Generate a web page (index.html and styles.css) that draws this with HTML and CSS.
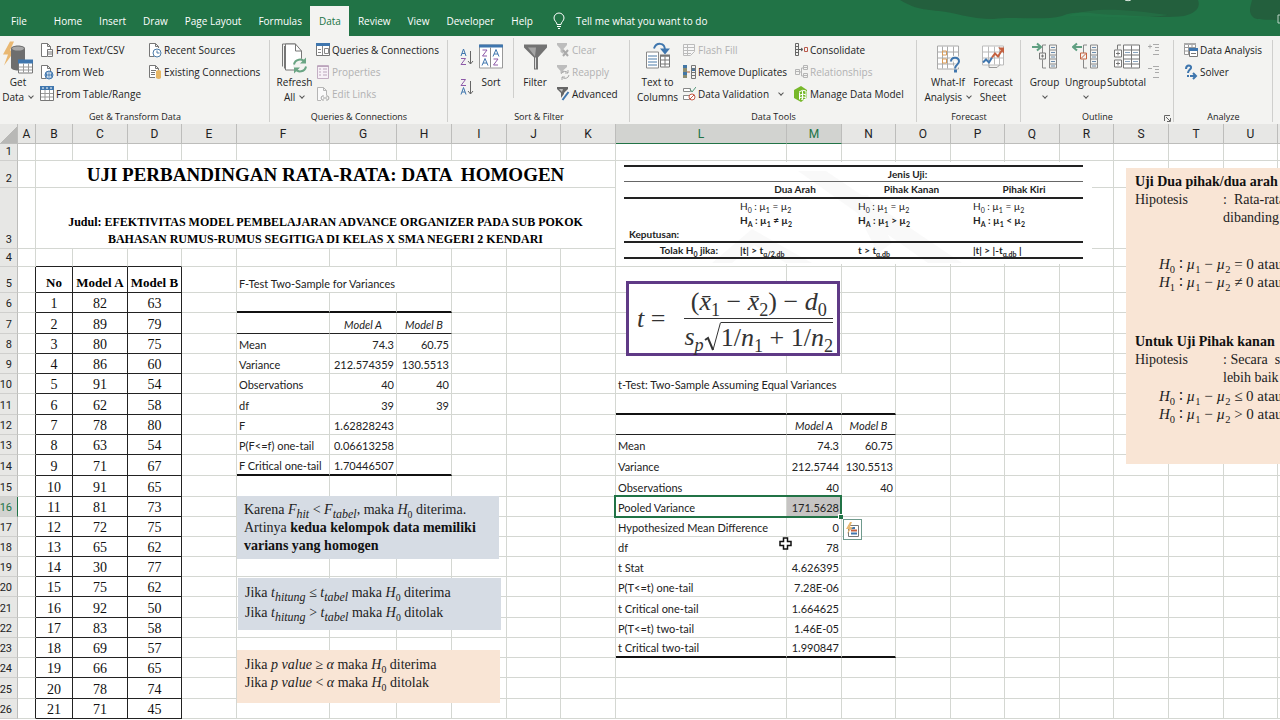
FILE: index.html
```html
<!DOCTYPE html>
<html lang="id">
<head>
<meta charset="utf-8">
<title>Uji Perbandingan Rata-Rata</title>
<link rel="stylesheet" href="styles.css">
</head>
<body>
<div class="app">
<header class="titlebar">
  <svg class="brush" width="380" height="36" viewBox="0 0 380 36" aria-hidden="true">
    <path d="M0 0h298c3 8-3 13-14 16-25 3-52-1-70-1-20 0-35-6-52 1-20 5-50 0-68 3-25 0-40-7-55-8-20-2-25-3-39-11z" fill="#235f3d"/>
    <path d="M352 0h28v21c-12-3-24 1-28-5-4-5-1-11 0-16z" fill="#235f3d"/>
    <path d="M168 16c28-10 60-6 100-1-30 5-70 1-100 1z" fill="#247a4a" opacity=".5"/>
    <path d="M225 0c3 1 5 1 7-1" stroke="#e8f0ea" fill="none"/>
    <path d="M380 15h-2v8h2" stroke="#b9d3c4" fill="none"/>
  </svg>
  <nav class="tabs">
    <button class="tab tab-file">File</button>
    <button class="tab">Home</button>
    <button class="tab">Insert</button>
    <button class="tab">Draw</button>
    <button class="tab">Page Layout</button>
    <button class="tab">Formulas</button>
    <button class="tab tab-active">Data</button>
    <button class="tab">Review</button>
    <button class="tab">View</button>
    <button class="tab">Developer</button>
    <button class="tab">Help</button>
    <button class="tab tab-tell"><svg width="12" height="18" viewBox="0 0 12 18" fill="none" stroke="#fff"><path d="M4 12.500c0-2.500-3-3.500-3-6.500a5 5 0 0 1 10 0c0 3-3 4-3 6.500zM4 14.500h4M5 16.500h2"/></svg>Tell me what you want to do</button>
  </nav>
</header>

<section class="ribbon" aria-label="Data">
  <div class="group">
    <div class="tools">
      <button class="big big-first"><svg width="32" height="34" viewBox="0 0 32 34"><path d="M8 1 1 14h5L2 25l11-15H8l4-9z" fill="#e9b872"/><path d="M9 8c0-4 14-4 14 0v19c0 4-14 4-14 0z" fill="#6e6e6e"/><ellipse cx="16" cy="8" rx="6" ry="2" fill="#a9a9a9"/><path d="M16.500 20.500h14v12h-14z" fill="#fff" stroke="#777"/><path d="M16 19h15v4H16z" fill="#3f76ae"/><path d="M17 26.500h13M17 29.500h13M21.500 23v9M26.500 23v9" stroke="#999"/></svg><span>Get<br>Data <i class="chev"></i></span></button>
      <div class="stack stack-a">
        <button class="small"><svg width="14" height="16" viewBox="0 0 14 16"><path d="M7 14.500H1.500v-13h6l3 3V7M7.500 1.500v3h3" fill="#fff" stroke="#777"/><path d="M7.500 7.500h5v7h-5zM7.500 10h5M7.500 12h5" fill="#fff" stroke="#777"/></svg>From Text/CSV</button>
        <button class="small"><svg width="14" height="16" viewBox="0 0 14 16"><path d="M6 14.500H1.500v-13h6l3 3V7M7.500 1.500v3h3" fill="#fff" stroke="#777"/><circle cx="9" cy="11" r="4" fill="#fff" stroke="#3f76ae"/><path d="M5 11h8M9 7v8M7 8q-1 3 0 6M11 8q1 3 0 6" stroke="#3f76ae" fill="none"/></svg>From Web</button>
        <button class="small"><svg width="14" height="16" viewBox="0 0 14 16"><path d="M.5 1.500h13v13H.5z" fill="#fff" stroke="#777"/><path d="M0 0h14v4H0z" fill="#3f76ae"/><path d="M1 7.500h12M1 11h12M5 4v10M9.500 4v10" stroke="#999"/><path d="M2 2h2M6 2h2M10 2h2" stroke="#fff"/></svg>From Table/Range</button>
      </div>
      <div class="stack">
        <button class="small"><svg width="14" height="16" viewBox="0 0 14 16"><path d="M6 14.500H1.500v-13h6l3 3V6M7.500 1.500v3h3" fill="#fff" stroke="#777"/><circle cx="9" cy="11" r="4" fill="#fff" stroke="#4a7ba8"/><path d="M9 8.500V11h2.500" stroke="#4a7ba8" fill="none"/></svg>Recent Sources</button>
        <button class="small"><svg width="14" height="16" viewBox="0 0 14 16"><path d="M7 13.500H1.500v-12h6l3 3V6M7.500 1.500v3h3M3 6.500h5M3 8.500h4M3 10.500h4" fill="#fff" stroke="#777"/><path d="M8 7q3-2 5 0v7q-2 2-5 0z" fill="#e8b765"/></svg>Existing Connections</button>
      </div>
    </div>
    <div class="caption">Get &amp; Transform Data</div>
  </div>

  <div class="group">
    <div class="tools">
      <button class="big big-refresh"><svg width="28" height="34" viewBox="0 0 28 34"><path d="M1.500 26V3.500h13M3.500 28V5.500" fill="none" stroke="#777"/><path d="M4.500 29.500v-26h10l6 7v19z" fill="#fff" stroke="#777"/><path d="M14.500 3.500v7h6" fill="none" stroke="#777"/><circle cx="19" cy="25" r="7" fill="#f3f3f1"/><path d="M13 24a6 6 0 0 1 11-2M25 26a6 6 0 0 1-11 2" fill="none" stroke="#6aa584" stroke-width="2"/><path d="M25 17v6h-6zM13 33v-6h6z" fill="#6aa584"/></svg><span>Refresh<br>All <i class="chev"></i></span></button>
      <div class="stack">
        <button class="small"><svg width="14" height="16" viewBox="0 0 14 16"><path d="M.5 1.500h13v12H.5z" fill="#fff" stroke="#777"/><path d="M0 1h14v3H0z" fill="#3f76ae"/><path d="M6.500 4v9M8.500 6.500h4v5h-4zM2 7.500h3M2 10.500h3" fill="none" stroke="#888"/></svg>Queries &amp; Connections</button>
        <button class="small" disabled><svg width="14" height="16" viewBox="0 0 14 16"><path d="M1.500 1.500h11v13h-11z" fill="#f7f1f7" stroke="#c3aec3"/><path d="M3 5h2M7 5h4M3 8h2M7 8h4M3 11h2M7 11h4M1 2.500h12" stroke="#bba5bb"/></svg>Properties</button>
        <button class="small" disabled><svg width="14" height="16" viewBox="0 0 14 16"><path d="M5 14.500H1.500v-13h6l3 3V9M7.500 1.500v3h3" fill="#fafafa" stroke="#b5b5b5"/><path d="M8 10H6q-2 2 0 4h2M10 10h2q2 2 0 4h-2M7 12h4" stroke="#a5a5a5" fill="none"/></svg>Edit Links</button>
      </div>
    </div>
    <div class="caption">Queries &amp; Connections</div>
  </div>

  <div class="group">
    <div class="tools">
      <div class="sorts">
        <button class="mini" aria-label="Sort A to Z"><svg width="14" height="18" viewBox="0 0 14 18" fill="none"><path d="M1 8 3.500 1 6 8M2 5.500h3" stroke="#3f76ae"/><path d="M1 10.500h4.500L1 16.500h5" stroke="#8d5aa8"/><path d="M10.500 3v13M8 13l2.500 3 2.500-3" stroke="#666"/></svg></button>
        <button class="mini" aria-label="Sort Z to A"><svg width="14" height="18" viewBox="0 0 14 18" fill="none"><path d="M1 1.500h4.500L1 7.500h5" stroke="#8d5aa8"/><path d="M1 16.500 3.500 9.500 6 16.500M2 14h3" stroke="#3f76ae"/><path d="M10.500 3v13M8 13l2.500 3 2.500-3" stroke="#666"/></svg></button>
      </div>
      <button class="big big-sort"><svg width="26" height="34" viewBox="0 0 26 34" fill="none"><path d="M1.500 4.500h23v23h-23z" fill="#fff" stroke="#999"/><path d="M1 4h24v3H1z" fill="#3f76ae"/><path d="M12.500 7v20" stroke="#888"/><path d="M4.500 9.500H9l-4.500 6H9M15.500 18.500H20l-4.500 6H20" stroke="#8d5aa8"/><path d="m4 25 3-7 3 7M5 22.500h4M15 16l3-7 3 7M16 13.500h4" stroke="#3f76ae"/></svg><span>Sort</span></button>
      <button class="big big-filter"><svg width="26" height="34" viewBox="0 0 26 34"><path d="M2 4h23v3l-9 10v12h-4V17L2 7z" fill="#737373"/><path d="M6 7h8l-1 9z" fill="#a5a5a5"/><path d="M13 17h1v11h-1z" fill="#ddd"/></svg><span>Filter</span></button>
      <div class="stack">
        <button class="small" disabled><svg width="14" height="16" viewBox="0 0 14 16"><path d="M1 1h10v2L7.500 7v5l-3-2V7L1 3z" fill="#bdbdbd"/><path d="m7 8 5 6M12 8l-5 6" stroke="#aaa" stroke-width="2"/></svg>Clear</button>
        <button class="small" disabled><svg width="14" height="16" viewBox="0 0 14 16"><path d="M1 1h10v2L7.500 6v3h-3V7L1 3z" fill="#bdbdbd"/><path d="M5 10a4 4 0 0 1 7-1M13 11a4 4 0 0 1-7 2M12 6v3H9M6 16v-3h3" fill="none" stroke="#aaa"/></svg>Reapply</button>
        <button class="small"><svg width="14" height="16" viewBox="0 0 14 16"><path d="M1 1h11v2L8 7v6H5V7L1 3z" fill="#666"/><path d="M3 3h4L6 6z" fill="#bbb"/><path d="m12 6-6 8" stroke="#f3f3f1" stroke-width="4"/><path d="m12.500 6-6 8" stroke="#3f76ae" stroke-width="2"/></svg>Advanced</button>
      </div>
    </div>
    <div class="caption">Sort &amp; Filter</div>
  </div>

  <div class="group">
    <div class="tools">
      <button class="big big-columns"><svg width="28" height="34" viewBox="0 0 28 34" fill="none"><path d="M2.500 11.500h12v16h-12z" fill="#fff" stroke="#888"/><path d="M4 15.500h9M4 18.500h9M4 21.500h9M4 24.500h9" stroke="#4a7ba8"/><path d="M16.500 15.500h9v11h-9zM16 19.500h9M16 23.500h9M21 16v10" fill="#fff" stroke="#777"/><path d="M16 14h10v2H16z" fill="#777"/><path d="M10 8c2-6 11-7 11 2" stroke="#3f76ae" stroke-width="2"/><path d="m16 8 5 6 5-6z" fill="#3f76ae"/></svg><span>Text to<br>Columns</span></button>
      <div class="stack stack-b">
        <button class="small" disabled><svg width="14" height="16" viewBox="0 0 14 16"><path d="M1.500 2.500h11v7l-4 4h-7zM1 5.500h11M1 8.500h11M1 11.500h8M5.500 3v10" fill="#f7f7f7" stroke="#bbb"/></svg>Flash Fill</button>
        <button class="small"><svg width="14" height="16" viewBox="0 0 14 16"><path d="M1 1h4v13H1z" fill="#8c8c70"/><path d="M1 1h4v3H1zM1 8h4v3H1zM10 4h3v3h-3z" fill="#4276a5"/><path d="M9.500 1.500h4v13h-4zM9 5h4M9 8.500h4M9 11.500h4" fill="none" stroke="#777"/><path d="M5 8h3" stroke="#b05a30"/></svg>Remove Duplicates</button>
        <button class="small"><svg width="14" height="16" viewBox="0 0 14 16" fill="none"><path d="M1.500 2.500h7v3h-7zM1.500 9.500h6v4h-6z" fill="#fff" stroke="#888"/><path d="m8 3 2 3 4-5" stroke="#51977b"/><circle cx="10" cy="11" r="3" fill="#fff" stroke="#c45a48"/><path d="m8 13 4-4" stroke="#c45a48"/></svg>Data Validation <i class="chev chev-end"></i></button>
      </div>
      <div class="stack">
        <button class="small"><svg width="14" height="16" viewBox="0 0 14 16" fill="none"><path d="M1.500 1.500h3v12h-3zM1 4.500h4M1 7.500h4M1 10.500h4" stroke="#666"/><path d="M5 7.500h3M7 6l2 1.500L7 9" stroke="#555"/><path d="M10.500 5.500h3v4h-3z" stroke="#b9574a"/></svg>Consolidate</button>
        <button class="small" disabled><svg width="14" height="16" viewBox="0 0 14 16" fill="none"><path d="M1.500 5.500h4v5h-4zM9.500 1.500h4v4h-4zM9.500 9.500h4v4h-4zM1 7.500h4M9 3.500h4M9 11.500h4M6 8h1.500V4H9M7.500 8v4H9" stroke="#b5b5b5"/></svg>Relationships</button>
        <button class="small"><svg width="14" height="16" viewBox="0 0 14 16" fill="none"><path d="m0 4 7-4 6 4v8l-6 4-7-4z" fill="#77b82a"/><path d="M5.500 6.500v7M5 6q4-3 7-1v8q-3 2-5 0M6 9q3-2 6 0M6 11.500q3-1 6 0M8.500 5v8" stroke="#fff"/></svg>Manage Data Model</button>
      </div>
    </div>
    <div class="caption">Data Tools</div>
  </div>

  <div class="group">
    <div class="tools">
      <button class="big big-whatif"><svg width="28" height="34" viewBox="0 0 28 34" fill="none"><path d="M3.500 5.500h21v23h-21zM4 11.500h20M4 17.500h20M4 23.500h20M8.500 6v22M13.500 6v22M19.500 6v22" fill="#fff" stroke="#aaa"/><path d="M8.500 10.500h4v4h-4zM8.500 18.500h4v4h-4z" stroke="#d99a55"/><path d="M17 22c0-6 9-6 8 0 0 3-4 3-4 6" stroke="#f3f3f1" stroke-width="5"/><path d="M17 21c0-5 8-5 8 0 0 3-4 3-4 7" stroke="#3f76ae" stroke-width="2"/><path d="M20 29h3v3h-3z" fill="#3f76ae"/></svg><span>What-If<br>Analysis <i class="chev"></i></span></button>
      <button class="big big-forecast"><svg width="28" height="34" viewBox="0 0 28 34" fill="none"><path d="M3.500 5.500h21v19h-21zM4 11.500h20M4 17.500h20M9.500 6v18M15.500 6v18M20.500 6v18" fill="#fff" stroke="#bbb"/><path d="M10 24v3h8l3-3" stroke="#999"/><path d="m4 22 3-3 3 3 3-5" stroke="#3f76ae" stroke-width="2"/><path d="m13 17 3-4 3 3 5-8" stroke="#c4603f" stroke-width="2"/><path d="M19 7h6v6z" fill="#c4603f"/></svg><span>Forecast<br>Sheet</span></button>
    </div>
    <div class="caption">Forecast</div>
  </div>

  <div class="group">
    <div class="tools">
      <button class="big big-outline"><svg width="28" height="34" viewBox="0 0 28 34" fill="none"><path d="M1 6.500h8M6 3l4 3.500L6 10" stroke="#5f9f81" stroke-width="2"/><path d="M18.500 4.500h7v23h-7zM18 9.500h7M18 14.500h7M18 18.500h7M18 23.500h7M15 4.500h-3.500v8M11.500 19v8.500H15" stroke="#888"/><path d="M20 7h4M20 12h4M20 16.500h4M20 21h4M20 25.500h4" stroke="#6c8dae"/><path d="M8.500 12.500h6v6h-6zM10 15.500h3M11.500 14v3" stroke="#777"/></svg><span>Group<br><i class="chev"></i></span></button>
      <button class="big big-outline"><svg width="28" height="34" viewBox="0 0 28 34" fill="none"><path d="M10 6.500H2M5 3 1 6.500 5 10" stroke="#5f9f81" stroke-width="2"/><path d="M18.500 4.500h7v23h-7zM18 9.500h7M18 14.500h7M18 18.500h7M18 23.500h7M15 4.500h-3.500v8M11.500 19v8.500H15" stroke="#888"/><path d="M20 7h4M20 12h4M20 16.500h4M20 21h4M20 25.500h4" stroke="#6c8dae"/><path d="M8.500 12.500h6v6h-6zM9 18l5-5" stroke="#c4603f"/></svg><span>Ungroup<br><i class="chev"></i></span></button>
      <button class="big big-outline"><svg width="28" height="34" viewBox="0 0 28 34" fill="none"><path d="M10.500 4.500h16v23h-16zM10 9.500h16M10 14.500h16M10 18.500h16M10 23.500h16M18.500 5v22" fill="#fff" stroke="#777"/><path d="M12 12h5M20 12h5M12 21h5M20 21h5" stroke="#8aa5bf"/><path d="M4.500 9V4.500H8" stroke="#777"/><path d="M1.500 9.500h7v7h-7zM1.500 19.500h7v7h-7zM3 13h4M5 11v4M3 23h4M5 21v4" fill="#fff" stroke="#777"/></svg><span>Subtotal</span></button>
      <div class="stack">
        <button class="small" disabled aria-label="Show Detail"><svg width="14" height="16" viewBox="0 0 14 16" fill="none" stroke="#aaa"><path d="M1 4.500h4M3 2.500v4M6 2.500h6M8 5.500h4M8 8.500h4M6 12.500h6"/></svg></button>
        <button class="small" disabled aria-label="Hide Detail"><svg width="14" height="16" viewBox="0 0 14 16" fill="none" stroke="#aaa"><path d="M1 4.500h4M6 2.500h6M8 5.500h4M8 8.500h4M6 13.500h6"/></svg></button>
      </div>
    </div>
    <div class="caption">Outline</div>
    <button class="launcher" aria-label="Outline settings"><svg width="7" height="7" viewBox="0 0 7 7" fill="none" stroke="#666"><path d="M.5 6V.5H6M2 2l4 4M6.500 3v3.500H3"/></svg></button>
  </div>

  <div class="group">
    <div class="tools">
      <div class="stack stack-analyze">
        <button class="small"><svg width="14" height="16" viewBox="0 0 14 16" fill="none"><path d="M.5 2.500h11v10H.5zM1 5.500h10M1 9h10M4.500 3v9M8 3v9" fill="#fff" stroke="#999"/><path d="M0 1h12v2H0z" fill="#aaa"/><path d="M5.500 7.500h8v7h-8z" fill="#fff" stroke="#777"/><path d="M5 6h9v3H5z" fill="#3f76ae"/><path d="M7 11.500h5" stroke="#777"/></svg>Data Analysis</button>
        <button class="small"><svg width="14" height="16" viewBox="0 0 14 16" fill="none" stroke="#3f76ae" stroke-width="2"><path d="M2 5c0-5 6-4 5-1-1 2-3 2-3 5M4 11v2M6 12h5M9 9l3 3-3 3"/></svg>Solver</button>
      </div>
    </div>
    <div class="caption">Analyze</div>
  </div>
  <div class="rest"></div>
</section>

<main class="sheet">
  <table class="cells" id="cells"></table>

  <div class="selection"><span class="handle"></span></div>
  <button class="quick" aria-label="Quick Analysis"><svg width="14" height="16" viewBox="0 0 14 16" fill="none"><path d="M2.500 3.500h10v11h-10z" stroke="#777"/><path d="M5 6h4M5 11.500h6" stroke="#3f76ae" stroke-width="2"/><path d="M5 8.500h6" stroke="#c4603f" stroke-width="2"/><path d="M4 0 0 7h3l-2 5 6-7H4l2-5z" fill="#e9b872"/></svg></button>
  <svg class="cursor" width="13" height="13" viewBox="0 0 13 13"><path d="M4.500 1h4v3.500H12v4H8.500V12h-4V8.500H1v-4h3.500z" fill="#fff" stroke="#111" stroke-width="1.500"/></svg>

  <div class="float hypo">
    <svg class="mark" width="480" height="99" viewBox="0 0 480 99" aria-hidden="true"><path d="M182 6h28l136 92h-34zM96 98l40-34 60 34h-26l-32-18-22 18zM232 30h20l24 48-14 10z" fill="#f6f6f6" opacity=".7"/></svg>
    <table class="hypo-table">
      <colgroup><col class="h1"><col class="h2"><col class="h3"><col class="h4"></colgroup>
      <tr class="r-top"><td></td><th colspan="3" class="mid">Jenis Uji:</th></tr>
      <tr class="r-head"><td></td><th class="mid">Dua Arah</th><th class="mid">Pihak Kanan</th><th class="mid">Pihak Kiri</th></tr>
      <tr class="r-null"><td></td><td>H<sub>0</sub> : µ<sub>1</sub> = µ<sub>2</sub></td><td>H<sub>0</sub> : µ<sub>1</sub> = µ<sub>2</sub></td><td>H<sub>0</sub> : µ<sub>1</sub> = µ<sub>2</sub></td></tr>
      <tr class="r-alt"><td></td><th>H<sub>A</sub> : µ<sub>1</sub> ≠ µ<sub>2</sub></th><th>H<sub>A</sub> : µ<sub>1</sub> &gt; µ<sub>2</sub></th><th>H<sub>A</sub> : µ<sub>1</sub> &lt; µ<sub>2</sub></th></tr>
      <tr class="r-dec"><th class="lead">Keputusan:</th><td></td><td></td><td></td></tr>
      <tr class="r-rule"><th class="end">Tolak H<sub>0</sub> jika:</th><th>|t| &gt; t<sub>α/2,db</sub></th><th>t &gt; t<sub>α,db</sub></th><th>|t| &gt; |-t<sub>α,db</sub> |</th></tr>
    </table>
  </div>

  <div class="float formula">
    <span><i>t</i> =</span>
    <div class="fraction">
      <div class="over">(<i>x̄</i><sub>1</sub> − <i>x̄</i><sub>2</sub>) − <i>d</i><sub>0</sub></div>
      <div class="under"><i>s<sub>p</sub></i><svg width="17" height="30" viewBox="0 0 17 30" fill="none" stroke="#333"><path d="m1 18 3-2 5 12" stroke-width="2"/><path d="M9 28 16.500.5"/></svg><span class="root">1/<i>n</i><sub>1</sub> + 1/<i>n</i><sub>2</sub></span></div>
    </div>
  </div>

  <div class="float note note-var">
    <p>Karena <i>F<sub>hit</sub></i> &lt; <i>F<sub>tabel</sub></i>, maka <i>H</i><sub>0</sub> diterima.</p>
    <p>Artinya <b>kedua kelompok data memiliki varians yang homogen</b></p>
  </div>
  <div class="float note note-t">
    <p>Jika <i>t<sub>hitung</sub></i> ≤ <i>t<sub>tabel</sub></i> maka <i>H</i><sub>0</sub> diterima</p>
    <p>Jika <i>t<sub>hitung</sub></i> &gt; <i>t<sub>tabel</sub></i> maka <i>H</i><sub>0</sub> ditolak</p>
  </div>
  <div class="float note note-p">
    <p>Jika <i>p value</i> ≥ <i>α</i> maka <i>H</i><sub>0</sub> diterima</p>
    <p>Jika <i>p value</i> &lt; <i>α</i> maka <i>H</i><sub>0</sub> ditolak</p>
  </div>

  <div class="float note note-side">
    <h2>Uji Dua pihak/dua arah</h2>
    <div class="pair"><span>Hipotesis</span><span>:&nbsp; Rata-rata<br>dibanding</span></div>
    <div class="claims claims-two">
      <p><i>H</i><sub>0</sub> ∶ <i>µ</i><sub>1</sub> − <i>µ</i><sub>2</sub> = 0 atau</p>
      <p><i>H</i><sub>1</sub> ∶ <i>µ</i><sub>1</sub> − <i>µ</i><sub>2</sub> ≠ 0 atau</p>
    </div>
    <h2>Untuk Uji Pihak kanan</h2>
    <div class="pair"><span>Hipotesis</span><span>: Secara&nbsp; si<br>lebih baik</span></div>
    <div class="claims">
      <p><i>H</i><sub>0</sub> ∶ <i>µ</i><sub>1</sub> − <i>µ</i><sub>2</sub> ≤ 0 atau</p>
      <p><i>H</i><sub>0</sub> ∶ <i>µ</i><sub>1</sub> − <i>µ</i><sub>2</sub> &gt; 0 atau</p>
    </div>
  </div>
</main>
</div>
<script src="sheet.js"></script>
</body>
</html>
```
FILE: styles.css
```css
* { box-sizing: border-box; }
body { margin: 0; background: #fff; color: #222; font-family: "Open Sans", "Noto Sans", sans-serif; }
.app { height: 100vh; display: flex; flex-direction: column; overflow: hidden; }
button { border: 0; padding: 0; margin: 0; background: none; font: inherit; color: inherit; }
sub { font-size: 70%; line-height: 0; }

/* Title bar and tabs */
.titlebar { position: relative; flex: none; height: 36px; padding-top: 6px; background: #217346; }
.brush { position: absolute; right: 0; top: 0; }
.tabs { position: relative; display: flex; height: 30px; padding-left: 2px; }
.tab { flex: none; padding: 0 8px 0 9px; font-size: 10px; color: #fff; display: flex; align-items: center; }
.tab-file { margin-right: 10px; }
.tab-active { background: #f3f3f1; color: #217346; }
.tab-tell { gap: 11px; padding-left: 12px; }

/* Ribbon */
.ribbon { flex: none; height: 88px; background: #f3f3f1; font-size: 10px; display: grid; grid-template-columns: 270px 178px 182px 287px 104px 153px 99px 1fr; }
.group { position: relative; display: flex; flex-direction: column; padding-top: 2px; }
.group::after { content: ""; position: absolute; right: 0; top: 4px; bottom: 4px; width: 1px; background: #cfcfcd; }
.tools { display: flex; height: 70px; }
.caption { text-align: center; font-size: 9px; line-height: 18px; }
.big { display: flex; flex-direction: column; align-items: center; line-height: 15px; flex: none; white-space: nowrap; }
.big svg, .small svg, .mini svg { flex: none; }
.big svg { height: 37px; padding-top: 2px; }
.big-first { width: 40px; padding-right: 4px; }
.big-refresh { width: 46px; padding-left: 3px; }
.big-sort { width: 32px; margin-right: 6px; }
.big-filter { width: 43px; height: 60px; border-left: 1px solid #cfcfcd; }
.big-columns { width: 52px; padding-left: 3px; }
.big-whatif { width: 58px; padding-left: 4px; }
.big-forecast { width: 36px; }
.big-outline { width: 41px; }
.big-outline:first-child { margin-left: 3px; }
.stack { display: flex; flex-direction: column; padding-top: 1px; }
.small { height: 22px; display: flex; align-items: center; gap: 2px; white-space: nowrap; text-align: left; }
.small:disabled { color: #b1b1b1; }
.stack-a { width: 108px; }
.stack-b { width: 112px; }
.stack-analyze { padding-left: 10px; }
.sorts { width: 27px; padding: 10px 0 0 11px; display: flex; flex-direction: column; gap: 12px; }
.mini { height: 18px; }
.chev { display: inline-block; width: 4px; height: 4px; margin: 0 1px 3px 2px; border: solid #555; border-width: 0 1px 1px 0; transform: rotate(45deg); }
.chev-end { margin-left: 8px; }
.launcher { position: absolute; right: 3px; bottom: 4px; height: 7px; display: flex; }

/* Grid */
.sheet { position: relative; flex: 1; overflow: hidden; }
.cells { width: 1333px; table-layout: fixed; border-collapse: separate; border-spacing: 0; font: 11px/16px Lato, "Open Sans", sans-serif; color: #222; }
.cells th, .cells td { padding: 0 2px 0 2px; border: solid #d4d7d2; border-width: 0 1px 1px 0; white-space: nowrap; text-align: left; vertical-align: bottom; }
.cells thead th { height: 20px; padding: 0; background: #e7e7e5; text-align: center; vertical-align: middle; font: 12px/18px Roboto, sans-serif; border-color: #bdbdbb; }
.cells tbody th { padding: 0 6px 0 0; background: #e7e7e5; text-align: right; font: 11px/16px Roboto, sans-serif; border-color: #bdbdbb #bdbdbb #cfcfcd; direction: rtl; }
.cells .corner { background: linear-gradient(135deg, #e7e7e5 55%, #b8b8b6 55%); }
.cells thead .on, .cells tbody .on { background: #d2d3d0; color: #217346; border-bottom-color: #217346; }
.cells tbody .on { border-bottom-color: #cfcfcd; border-right-color: #217346; }
.cells .title { font: bold 19px/24px "Liberation Serif", serif; text-align: center; color: #000; white-space: pre; }
.cells .subtitle { font: bold 12px/17px "Liberation Serif", serif; text-align: center; color: #000; }
.cells .pupil { font: 14px/16px "Liberation Serif", serif; text-align: center; padding: 0; border-color: #222; color: #111; }
.cells .name { font-weight: bold; font-size: 13px; line-height: 18px; color: #000; }
.cells .edge-right { border-right-color: #222; }
.cells .edge-bottom { border-bottom-color: #222; }
.cells .num { text-align: right; }
.cells .label { text-align: center; font-style: italic; }
.cells .thick { border-bottom: 2px solid #111; }
.cells .thin { border-bottom-color: #222; }
.cells .picked { background: #c6c4c3; }

.selection { position: absolute; left: 614px; top: 371px; width: 228px; height: 23px; border: 2px solid #217346; }
.handle { position: absolute; right: -3px; bottom: -3px; width: 5px; height: 5px; background: #217346; border: solid #fff; border-width: 1px 0 0 1px; }
.quick { position: absolute; left: 843px; top: 395px; width: 19px; height: 21px; background: #fff; border: 1px solid #6f9a8d; display: flex; align-items: center; justify-content: center; }
.cursor { position: absolute; left: 779px; top: 413px; }

/* Objects floating over the grid */
.float { position: absolute; }
.hypo { left: 616px; top: 38px; width: 476px; height: 102px; padding: 3px 9px 0 8px; background: #fff; }
.mark { position: absolute; left: 0; top: 3px; }
.hypo-table { position: relative; width: 100%; table-layout: fixed; border-collapse: collapse; font: 10px/14px Lato, sans-serif; color: #222; border-top: 2px solid #222; border-bottom: 2px solid #222; }
.hypo-table td, .hypo-table th { padding: 0; text-align: left; white-space: nowrap; }
.h1 { width: 116px; }
.h2 { width: 118px; }
.h3 { width: 115px; }
.hypo-table .mid { text-align: center; padding-right: 8px; }
.hypo-table .lead { padding-left: 5px; }
.hypo-table .end { text-align: right; padding-right: 22px; }
.r-top { height: 15px; border-bottom: 1px solid #666; }
.r-head { height: 16px; border-bottom: 2px solid #222; }
.r-dec { height: 15px; border-bottom: 2px solid #222; }
.r-rule { height: 15px; }

.formula { left: 626px; top: 157px; width: 214px; height: 75px; padding: 0 4px 0 8px; border: 3px solid #5f3a86; background: #fff; display: flex; align-items: center; justify-content: space-between; font: 26px/28px "Liberation Serif", serif; color: #333; white-space: nowrap; }
.fraction { text-align: center; }
.over { line-height: 32px; border-bottom: 1px solid #333; }
.under { display: flex; align-items: center; padding-top: 3px; }
.root { border-top: 1px solid #333; line-height: 29px; }

.note { font: 14px/18px "Liberation Serif", serif; color: #222; white-space: nowrap; }
.note p, .note h2 { margin: 0; font-size: 14px; }
.note i sub { font-size: 12px; }
.note b, .note h2 { color: #111; }
.note-var { left: 237px; top: 372px; width: 262px; height: 63px; padding: 5px 7px; background: #d6dce4; white-space: normal; }
.note-t { left: 238px; top: 454px; width: 263px; height: 52px; padding: 5px 7px; background: #d6dce4; line-height: 20px; }
.note-p { left: 237px; top: 526px; width: 263px; height: 53px; padding: 6px 8px; background: #f9e5d5; }
.note-side { left: 1126px; top: 44px; width: 400px; height: 296px; padding: 5px 9px; background: #f9e5d5; }
.pair { display: grid; grid-template-columns: 88px 1fr; }
.note .claims { padding-left: 24px; }
.note .claims p { font-size: 15px; }
.claims-two { padding-top: 28px; padding-bottom: 42px; }
```
FILE: sheet.js
```js
const COLUMNS = "ABCDEFGHIJKLMNOPQRSTUV".split("");
const WIDTHS = [18, 18, 37, 55, 54, 55, 93, 67, 55, 55, 54, 55, 171, 55, 54, 55, 54, 55, 54, 55, 55, 54, 55];
const HEIGHTS = [17, 27, 61, 18, 26, 20, 21, 20, 20, 20, 21, 20, 20, 21, 21, 20, 20, 20, 20, 20, 21, 20, 20, 20, 21, 20];
const MODEL_A = [82, 89, 80, 86, 91, 62, 78, 63, 71, 91, 81, 72, 65, 30, 75, 92, 83, 69, 66, 78, 71];
const MODEL_B = [63, 79, 75, 60, 54, 58, 80, 54, 67, 65, 73, 75, 62, 77, 62, 50, 58, 57, 65, 74, 45];

const cells = {};
const put = (ref, text, cls = "", span = 1) => { cells[ref] = { text, cls, span }; };
const mark = (refs, cls) => refs.split(" ").forEach(ref => {
  cells[ref] = cells[ref] || { text: "", cls: "", span: 1 };
  cells[ref].cls += " " + cls;
});

put("B2", "UJI PERBANDINGAN RATA-RATA: DATA  HOMOGEN", "title", 10);
put("B3", "Judul: EFEKTIVITAS MODEL PEMBELAJARAN ADVANCE ORGANIZER PADA SUB POKOK\nBAHASAN RUMUS-RUMUS SEGITIGA DI KELAS X SMA NEGERI 2 KENDARI", "subtitle", 10);

mark("B4 C4 D4", "edge-bottom");
put("B5", "No", "pupil name");
put("C5", "Model A", "pupil name");
put("D5", "Model B", "pupil name");
mark("A5", "edge-right");
MODEL_A.forEach((a, i) => {
  const row = i + 6;
  mark("A" + row, "edge-right");
  put("B" + row, i + 1, "pupil");
  put("C" + row, a, "pupil");
  put("D" + row, MODEL_B[i], "pupil");
});

const report = (cols, top, title, rows) => {
  const [a, b, c] = cols;
  put(a + top, title, "", 3);
  mark([a, b, c].map(x => x + (top + 1)).join(" "), "thick");
  put(b + (top + 2), "Model A", "label");
  put(c + (top + 2), "Model B", "label");
  mark([a, b, c].map(x => x + (top + 2)).join(" "), "thin");
  rows.forEach(([name, x, y], i) => {
    const row = top + 3 + i;
    put(a + row, name);
    put(b + row, x, "num");
    if (y) put(c + row, y, "num");
  });
  mark([a, b, c].map(x => x + (top + 2 + rows.length)).join(" "), "thick");
};

report("FGH", 5, "F-Test Two-Sample for Variances", [
  ["Mean", "74.3", "60.75"],
  ["Variance", "212.574359", "130.5513"],
  ["Observations", "40", "40"],
  ["df", "39", "39"],
  ["F", "1.62828243"],
  ["P(F<=f) one-tail", "0.06613258"],
  ["F Critical one-tail", "1.70446507"]
]);
report("LMN", 10, "t-Test: Two-Sample Assuming Equal Variances", [
  ["Mean", "74.3", "60.75"],
  ["Variance", "212.5744", "130.5513"],
  ["Observations", "40", "40"],
  ["Pooled Variance", "171.5628"],
  ["Hypothesized Mean Difference", "0"],
  ["df", "78"],
  ["t Stat", "4.626395"],
  ["P(T<=t) one-tail", "7.28E-06"],
  ["t Critical one-tail", "1.664625"],
  ["P(T<=t) two-tail", "1.46E-05"],
  ["t Critical two-tail", "1.990847"]
]);
mark("M16", "picked");

const table = document.getElementById("cells");
const add = (parent, tag, cls, text) => {
  const el = document.createElement(tag);
  if (cls) el.className = cls.trim();
  if (text !== undefined) el.innerText = text;
  parent.append(el);
  return el;
};

const group = add(table, "colgroup");
WIDTHS.forEach(w => { add(group, "col").style.width = w + "px"; });

const head = add(add(table, "thead"), "tr");
add(head, "th", "corner", "");
COLUMNS.forEach(c => add(head, "th", c === "L" || c === "M" ? "on" : "", c));

const body = add(table, "tbody");
HEIGHTS.forEach((h, i) => {
  const row = i + 1;
  const tr = add(body, "tr");
  tr.style.height = h + "px";
  add(tr, "th", row === 16 ? "on" : "", row);
  for (let c = 0; c < COLUMNS.length; c++) {
    const cell = cells[COLUMNS[c] + row];
    const td = add(tr, "td", cell ? cell.cls : "", cell ? cell.text : "");
    if (cell && cell.span > 1) {
      td.colSpan = cell.span;
      c += cell.span - 1;
    }
  }
});
```
